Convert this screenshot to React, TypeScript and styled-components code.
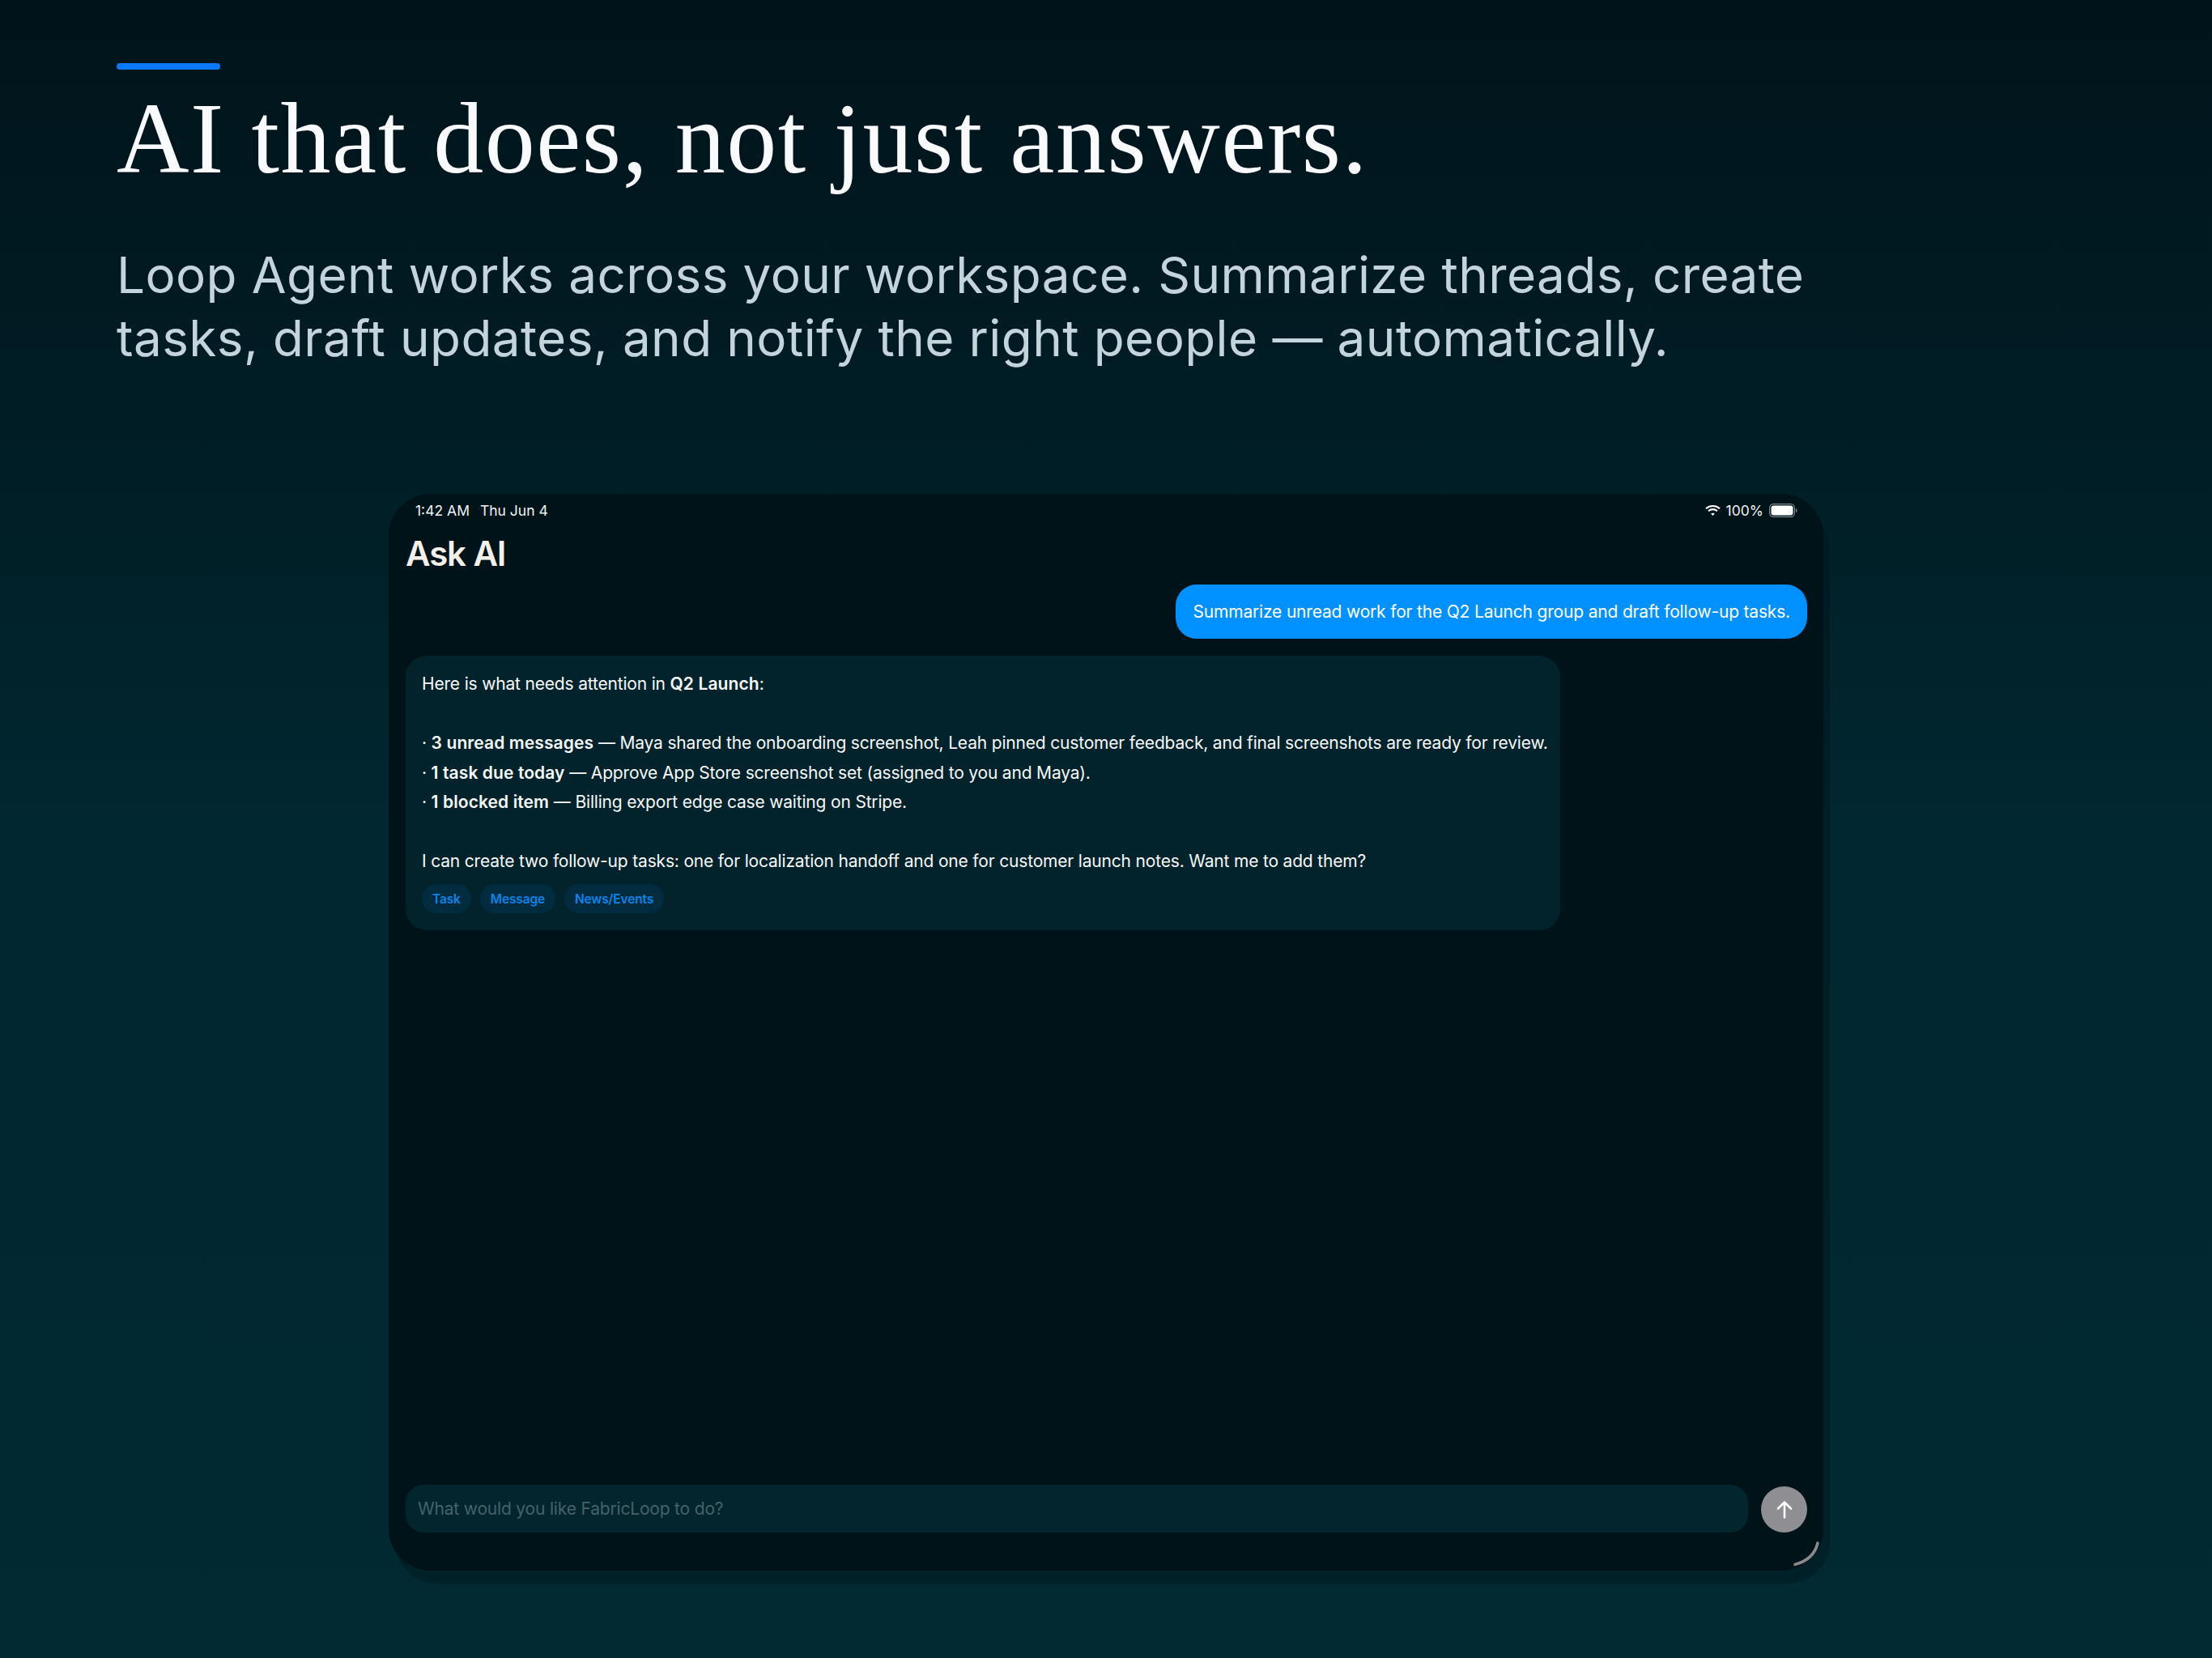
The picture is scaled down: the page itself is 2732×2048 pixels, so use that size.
import React from "react";
import styled, { createGlobalStyle } from "styled-components";

const Global = createGlobalStyle`
  html, body { margin: 0; padding: 0; }
  body { background: #001318; font-family: Inter, "Noto Sans", sans-serif; }
`;

const Page = styled.main`
  box-sizing: border-box;
  width: 2732px;
  height: 2048px;
  padding: 78px 0 0;
  overflow: hidden;
  background: linear-gradient(180deg, #00131a 0%, #012730 50%, #012a32 100%);
  display: flex;
  flex-direction: column;
`;

const Hero = styled.header`
  padding: 0 144px;
  display: flex;
  flex-direction: column;
  height: 532px;
`;

const Accent = styled.div`
  width: 128px;
  height: 8px;
  border-radius: 4px;
  background: #0a78f8;
`;

const Headline = styled.h1`
  margin: 21px 0 0;
  font-family: "Liberation Serif", Georgia, serif;
  font-weight: 400;
  font-size: 124px;
  line-height: 130px;
  letter-spacing: 1.55px;
  color: #f8fafc;
  white-space: nowrap;
`;

const Lead = styled.p`
  margin: 64px 0 0;
  font-size: 62px;
  line-height: 78px;
  font-weight: 400;
  letter-spacing: 0.4px;
  color: #c4d4dc;
  white-space: pre-line;
`;

const Device = styled.section`
  position: relative;
  box-sizing: border-box;
  width: 1772px;
  height: 1330px;
  margin: 0 auto;
  border-radius: 52px;
  background: #001318;
  box-shadow: 8px 16px 0 rgba(0, 19, 24, 0.4);
  display: flex;
  flex-direction: column;
`;

const StatusBar = styled.div`
  height: 40px;
  padding: 0 32px 0 33px;
  display: flex;
  align-items: center;
  justify-content: space-between;
  font-size: 17.500px;
  color: #eef2f3;
`;

const StatusGroup = styled.div<{ $gap: number }>`
  display: flex;
  align-items: center;
  gap: ${(p) => p.$gap}px;
`;

const Title = styled.h2`
  margin: 0;
  height: 72px;
  padding: 2px 21px 0;
  box-sizing: border-box;
  font-size: 42px;
  font-weight: 600;
  letter-spacing: -1.1px;
  line-height: 64px;
  color: #f3efe9;
`;

const Chat = styled.div`
  flex: 1;
  padding: 0 20px 0 21px;
  display: flex;
  flex-direction: column;
  gap: 21px;
  font-size: 21px;
  letter-spacing: -0.18px;
  color: #f6f8f8;
`;

const UserBubble = styled.div`
  align-self: flex-end;
  height: 67px;
  box-sizing: border-box;
  padding: 0 21px;
  border-radius: 26px;
  background: #0091ff;
  color: #fff;
  display: flex;
  align-items: center;
`;

const AgentBubble = styled.div`
  box-sizing: border-box;
  width: 1426px;
  height: 339px;
  padding: 17px 20px 0;
  border-radius: 26px;
  background: #02232b;
`;

const Line = styled.div`
  height: 36.500px;
  line-height: 36.500px;
  white-space: nowrap;
`;

const Strong = styled.b`
  font-weight: 600;
  letter-spacing: 0.1px;
`;

const Chips = styled.div`
  margin-top: 9.700px;
  display: flex;
  gap: 11px;
`;

const Chip = styled.span`
  height: 36px;
  padding: 0 13px;
  border-radius: 18px;
  background: #012c40;
  color: #0a84e8;
  font-size: 15.500px;
  font-weight: 600;
  letter-spacing: -0.15px;
  display: flex;
  align-items: center;
`;

const Composer = styled.div`
  padding: 0 20px 47px 21px;
  display: flex;
  align-items: flex-end;
  gap: 16px;
`;

const Field = styled.div`
  flex: 1;
  height: 59px;
  box-sizing: border-box;
  padding: 0 15px;
  border-radius: 22px;
  background: #02252e;
  color: #46626a;
  font-size: 21px;
  letter-spacing: -0.18px;
  display: flex;
  align-items: center;
`;

const Send = styled.button`
  width: 57px;
  height: 57px;
  padding: 0;
  border: 0;
  border-radius: 50%;
  background: #8e8e93;
  display: flex;
  align-items: center;
  justify-content: center;
`;

const CornerArc = styled.svg`
  position: absolute;
  right: 2px;
  bottom: 4px;
`;

const Wifi = () => (
  <svg width="19" height="14" viewBox="0 0 19 14" fill="none" stroke="#fff" strokeWidth="2.100">
    <path d="M1 5.200C5.800 1 13.200 1 18 5.200" />
    <path d="M4 8.200C7.200 5.400 11.800 5.400 15 8.200" />
    <path d="M9.500 14l-2.300-2.400c1.200-1 3.400-1 4.600 0z" fill="#fff" stroke="none" />
  </svg>
);

const Battery = () => (
  <svg width="35" height="17" viewBox="0 0 35 17" fill="none">
    <rect x="0.600" y="0.600" width="30.800" height="15.800" rx="4.600" stroke="#7d8a8f" strokeWidth="1.200" />
    <rect x="2.500" y="2.500" width="27" height="12" rx="3" fill="#fff" />
    <path d="M33 6v5c1-.3 1.600-1.300 1.600-2.500S34 6.300 33 6z" fill="#7d8a8f" />
  </svg>
);

export default function App() {
  return (
    <Page>
      <Global />
      <Hero>
        <Accent />
        <Headline>AI that does, not just answers.</Headline>
        <Lead>{"Loop Agent works across your workspace. Summarize threads, create\ntasks, draft updates, and notify the right people — automatically."}</Lead>
      </Hero>
      <Device>
        <StatusBar>
          <StatusGroup $gap={13}>
            <span>1:42 AM</span>
            <span>Thu Jun 4</span>
          </StatusGroup>
          <StatusGroup $gap={7}>
            <Wifi />
            <span>100%</span>
            <Battery />
          </StatusGroup>
        </StatusBar>
        <Title>Ask AI</Title>
        <Chat>
          <UserBubble>Summarize unread work for the Q2 Launch group and draft follow-up tasks.</UserBubble>
          <AgentBubble>
            <Line>Here is what needs attention in <Strong>Q2 Launch</Strong>:</Line>
            <Line />
            <Line>· <Strong>3 unread messages</Strong> — Maya shared the onboarding screenshot, Leah pinned customer feedback, and final screenshots are ready for review.</Line>
            <Line>· <Strong>1 task due today</Strong> — Approve App Store screenshot set (assigned to you and Maya).</Line>
            <Line>· <Strong>1 blocked item</Strong> — Billing export edge case waiting on Stripe.</Line>
            <Line />
            <Line>I can create two follow-up tasks: one for localization handoff and one for customer launch notes. Want me to add them?</Line>
            <Chips>
              <Chip>Task</Chip>
              <Chip>Message</Chip>
              <Chip>News/Events</Chip>
            </Chips>
          </AgentBubble>
        </Chat>
        <Composer>
          <Field>What would you like FabricLoop to do?</Field>
          <Send aria-label="Send">
            <svg width="22" height="24" viewBox="0 0 22 24" fill="none" stroke="#fff" strokeWidth="2.600" strokeLinecap="round" strokeLinejoin="round">
              <path d="M11 21.500V3" />
              <path d="M3 10.500L11 2.500L19 10.500" />
            </svg>
          </Send>
        </Composer>
        <CornerArc width="36" height="36" viewBox="0 0 36 36" fill="none">
          <path d="M3 32.500C18 28.500 28 19 31 6" stroke="#8a8a8a" strokeWidth="3.600" strokeLinecap="round" />
        </CornerArc>
      </Device>
    </Page>
  );
}
